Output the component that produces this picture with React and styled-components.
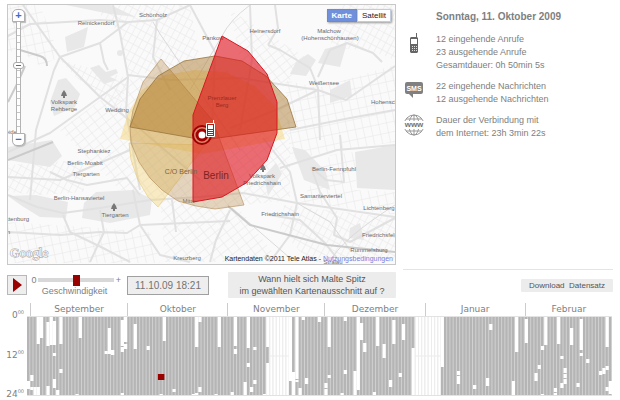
import React from "react";
import styled, { createGlobalStyle } from "styled-components";

const GlobalStyle = createGlobalStyle`
  * {
    box-sizing: border-box;
  }

  body {
    margin: 0;
    background: #fff;
    color: #808080;
    font-family: "Liberation Sans", Arial, sans-serif;
    font-size: 9px;
    line-height: 13px;
  }

  button,
  input {
    margin: 0;
    padding: 0;
    font-family: inherit;
  }
`;

const Page = styled.main`
  padding: 4px 7px;
`;

const Columns = styled.div`
  display: grid;
  grid-template-columns: minmax(0, 389fr) minmax(0, 210fr);
  column-gap: 7px;
`;

/* map */

const MapFrame = styled.section`
  position: relative;
  border: 1px solid #c8c8c8;
  overflow: hidden;
`;

const MapCanvas = styled.svg`
  display: block;
  width: 100%;
  height: auto;
  font-family: "Liberation Sans", Arial, sans-serif;
`;

const MapTypes = styled.div`
  position: absolute;
  top: 4px;
  right: 4px;
  display: flex;
  box-shadow: 1px 1px 2px #999;
`;

const MapTypeButton = styled.button`
  height: 13px;
  padding: 0 4px;
  border: 1px solid ${(props) => (props.$active ? "#6d8acc" : "#c4cbdc")};
  background: ${(props) => (props.$active ? "#7190dc" : "#fff")};
  color: ${(props) => (props.$active ? "#fff" : "#222")};
  font-size: 8px;
  font-weight: ${(props) => (props.$active ? "bold" : "normal")};
  line-height: 11px;
`;

const ZoomControl = styled.div`
  position: absolute;
  top: 4px;
  left: 4px;
  display: flex;
  flex-direction: column;
  align-items: center;
`;

const ZoomButton = styled.button`
  width: 13px;
  height: 13px;
  border: 1px solid #b0b0b0;
  border-radius: ${(props) => (props.$end ? "0 0 5px 5px" : "5px 5px 0 0")};
  background: #fff;
  box-shadow: 1px 1px 1px #bbb;
  color: #3c6ccf;
  font-size: 11px;
  font-weight: bold;
  line-height: 9px;
`;

const ZoomSlider = styled.input.attrs({ type: "range" })`
  appearance: none;
  writing-mode: vertical-lr;
  direction: rtl;
  width: 11px;
  height: 111px;
  background: none;

  &::-webkit-slider-runnable-track {
    width: 5px;
    height: 111px;
    border: solid #b4b4b4;
    border-width: 0 1px;
    background: repeating-linear-gradient(#fff 0 6px, #c4c4c4 6px 7px);
  }

  &::-webkit-slider-thumb {
    appearance: none;
    width: 11px;
    height: 7px;
    margin-left: -4px;
    border: 1px solid #a8a8a8;
    border-radius: 3px;
    background: linear-gradient(#3c6ccf, #3c6ccf) center / 5px 1px no-repeat #fff;
  }
`;

const Attribution = styled.p`
  position: absolute;
  right: 2px;
  bottom: 0;
  margin: 0;
  color: #222;
  font-size: 7px;
  line-height: 11px;

  a {
    color: #8080dd;
    text-decoration: none;
  }
`;

const parks = [
  "58,80 66,78 80,94 75,107 54,116 50,102",
  "65,37 88,27 84,47 67,52",
  "90,68 99,65 106,72 116,69 118,73 110,77 117,80 104,84",
  "66,5 110,5 136,17 110,14",
  "325,49 347,43 340,67 318,63",
  "296,62 308,54 316,60 306,76 290,74",
  "84,203 96,192 133,190 152,199 150,215 110,223 82,218",
  "8,196 36,195 68,202 66,218 40,217 22,206",
  "8,147 52,140 62,156 50,167 8,160",
  "355,152 395,145 395,190 357,188",
  "292,147 305,150 326,172 330,190 304,180",
  "264,176 276,163 282,174 268,196",
  "350,228 360,223 364,240 349,238",
  "330,90 350,80 352,96 330,103",
];

const blocks = [
  { id: "a", points: "60,60 128,78 120,112 100,97 75,76" },
  { id: "b", points: "8,5 40,5 60,57 40,66 20,50 8,52" },
  { id: "a", points: "90,5 190,5 200,60 128,77 120,33" },
  { id: "c", points: "60,130 128,80 200,60 290,95 290,200 200,210 120,190" },
  { id: "b", points: "8,222 100,228 150,232 160,263 8,263" },
  { id: "a", points: "8,165 82,160 84,192 40,195 8,192" },
  { id: "c", points: "160,200 240,210 280,262 165,262" },
  { id: "b", points: "285,80 318,88 395,65 395,142 337,150 290,160" },
  { id: "c", points: "230,10 310,60 280,90 240,60" },
  { id: "a", points: "284,205 395,218 395,262 310,262 280,230" },
  { id: "b", points: "330,155 355,152 356,190 395,192 395,215 300,202" },
  { id: "a", points: "340,5 395,5 395,60 370,50 330,48" },
];

const streets = [
  "M23 5 L60 57 L100 97 L133 123 L200 180",
  "M113 5 L120 33 L128 77 L126 112 L140 190",
  "M60 57 L100 43 L128 22 L157 20 L190 5",
  "M157 20 L153 57 L170 90",
  "M60 57 L54 70 L36 130 L30 200",
  "M100 43 L104 62 L108 70",
  "M8 36 L30 24 L66 22 L100 20 L128 22",
  "M128 77 L50 133 L8 152",
  "M128 75 L170 80 L240 78 L318 90",
  "M190 5 L215 52 L212 130",
  "M250 5 L252 60 L240 130",
  "M268 45 L280 50 L310 68 L318 88 L320 140",
  "M318 77 L330 50 L347 43 L373 53 L382 62",
  "M318 90 L346 100 L395 66",
  "M318 90 L276 110 L230 128",
  "M275 5 L278 28 L268 45",
  "M395 110 L350 118 L290 130",
  "M280 168 L337 150 L395 145",
  "M243 193 L297 203 L395 217",
  "M263 138 L290 172 L297 203 L290 235 L270 262",
  "M311 167 L320 192 L337 218 L334 235 L350 242 L395 218",
  "M311 167 L326 180 L344 182 L340 135",
  "M8 195 L37 207 L63 213 L100 208 L150 200 L200 197 L243 193",
  "M8 232 L60 235 L100 232 L127 233 L140 225 L230 221",
  "M63 215 L70 232 L103 248 L130 262",
  "M100 210 L104 232 L90 262",
  "M133 190 L140 225 L160 255 L190 262",
  "M50 172 L67 180 L87 185 L127 178 L140 195",
  "M172 200 L176 232",
  "M230 210 L216 240 L210 262",
  "M8 177 L60 180 L130 150",
  "M270 215 L300 220 L325 243 L340 262",
];

const motorways = [
  "M20 50 L40 56 Q47 58 47 66",
  "M8 102 L18 82 L25 66",
  "M8 160 L53 142",
  "M228 206 L250 225 L300 238 L327 245 L395 252",
];

const railways = [
  "M250 5 Q230 20 222 36 L190 90",
  "M153 22 L160 34 L182 66 L240 150",
  "M232 208 L290 258",
  "M297 203 L330 222 L350 250",
  "M395 205 Q340 240 330 262",
];

const places = [
  ["Schönholz", 153, 17],
  ["Reinickendorf", 96, 25],
  ["Pankow", 213, 40],
  ["Heinersdorf", 265, 33],
  ["Malchow", 329, 33],
  ["(Hohenschönhausen)", 330, 40],
  ["Weißensee", 324, 85],
  ["Volkspark", 64, 104],
  ["Rehberge", 64, 111],
  ["Wedding", 117, 112],
  ["Stephankiez", 94, 153],
  ["Berlin-Moabit", 85, 165],
  ["Tiergarten", 86, 176],
  ["Berlin-Hansaviertel", 79, 200],
  ["Tiergarten", 115, 217],
  ["Kreuzberg", 187, 260],
  ["Volkspark", 262, 178],
  ["Friedrichshain", 262, 185],
  ["Berlin-Fennpfuhl", 334, 171],
  ["Samariterviertel", 321, 198],
  ["Friedrichshain", 280, 216],
  ["Lichtenberg", 379, 210],
  ["Rummelsburg", 369, 252],
  ["Stralau", 333, 264],
  ["Mitte", 189, 203],
];

const StreetGrid = ({ id, size, angle }) => (
  <pattern
    id={`grid-${id}`}
    width={size}
    height={size + 2}
    patternUnits="userSpaceOnUse"
    patternTransform={`rotate(${angle})`}
  >
    <path d={`M0 0 H${size} M0 0 V${size + 2}`} stroke="#e6e6e6" fill="none" />
  </pattern>
);

const Tree = ({ x, y }) => (
  <path
    d="M0 -4 L2 -1 L3 2 H1 V4 H-1 V2 H-3 L-2 -1 Z"
    transform={`translate(${x} ${y})`}
    fill="#777"
  />
);

const CityMap = () => (
  <MapCanvas viewBox="8 5 387 259" role="img" aria-label="Karte von Berlin">
    <defs>
      <StreetGrid id="a" size={6} angle={28} />
      <StreetGrid id="b" size={8} angle={-12} />
      <StreetGrid id="c" size={7} angle={52} />
    </defs>
    <rect x="8" y="5" width="387" height="259" fill="#fafafa" />
    {blocks.map((block) => (
      <polygon
        key={block.points}
        points={block.points}
        fill={`url(#grid-${block.id})`}
      />
    ))}
    <g fill="#e8e8e8">
      {parks.map((points) => (
        <polygon key={points} points={points} />
      ))}
      <circle cx="120" cy="53" r="3" />
    </g>
    <g fill="none" strokeLinejoin="round">
      <g stroke="#e1e1e1" strokeWidth="2">
        {streets.map((d) => (
          <path key={d} d={d} />
        ))}
      </g>
      <g stroke="#dadada">
        {railways.map((d) => (
          <path key={d} d={d} />
        ))}
      </g>
      <g stroke="#cbcbcb" strokeWidth="2">
        {motorways.map((d) => (
          <path key={d} d={d} />
        ))}
      </g>
    </g>

    <g fill="#6a6a6a" fontSize="6" textAnchor="middle">
      {places.map(([name, x, y]) => (
        <text key={`${name}${y}`} x={x} y={y}>
          {name}
        </text>
      ))}
      <g textAnchor="start">
        <text x="371" y="104">Hohenschönhausen</text>
        <text x="362" y="237">Friedrichsfelde</text>
      </g>
      <g textAnchor="end">
        <text x="29" y="221">Charlottenburg</text>
        <text x="17" y="134">Jungfernheide</text>
        <text x="10" y="234">n</text>
      </g>
    </g>
    <Tree x={64} y={94} />
    <Tree x={114} y={207} />
    <Tree x={263} y={168} />

    {/* reach of the radio cells */}
    <g strokeLinejoin="round">
      <polygon
        points="120,139 128,113 142,90 165,75 195,70 225,72 255,86 275,106 285,139 202,154"
        fill="#f5cf60"
        fillOpacity="0.42"
      />
      <polygon
        points="129,143 131,160 138,180 148,197 158,207 205,145"
        fill="#f5cf60"
        fillOpacity="0.36"
        stroke="#e8c878"
        strokeOpacity="0.6"
      />
      <polygon
        points="161,59 143,82 133,110 130,127 131,143 139,162 150,178 162,190 178,201 196,206 215,209 244,205 213,121"
        fill="#b98542"
        fillOpacity="0.32"
        stroke="#b08a58"
        strokeOpacity="0.6"
      />
      <polygon
        points="130,127 140,99 158,76 184,61 215,56 242,61 266,76 287,99 296,127 204,140"
        fill="#a87022"
        fillOpacity="0.45"
        stroke="#99763e"
        strokeOpacity="0.8"
      />
      <polygon
        points="222,36 248,51 267,74 277,102 277,133 267,160 246,183 222,197 193,202 193,115"
        fill="#e00d18"
        fillOpacity="0.6"
        stroke="#d81820"
      />
    </g>
    <g textAnchor="middle">
      <g fontSize="6" fill="#a02a1c">
        <text x="222" y="100">Prenzlauer</text>
        <text x="222" y="107">Berg</text>
      </g>
      <text x="181" y="174" fontSize="7" fill="#7d633c">C/O Berlin</text>
      <text x="216" y="179" fontSize="10" fill="#7c2424">Berlin</text>
    </g>

    {/* current position */}
    <circle cx="202" cy="135" r="9" fill="#d98468" stroke="#a00000" strokeWidth="2" />
    <circle cx="202" cy="135" r="5" fill="#fff" stroke="#a00000" strokeWidth="3" />
    <g stroke="#fff">
      <path d="M213.5 120 V124" />
      <path d="M206.5 123.5 H214.5 V136.5 H206.5 Z" fill="#b81a14" />
      <path d="M208 125 H213 V129 H208 Z" fill="#fff" stroke="none" />
      <path d="M208 130.5 H213 M208 132.5 H213 M208 134.5 H213" />
    </g>

    <text
      x="10"
      y="257"
      fontFamily="Liberation Serif, serif"
      fontSize="13"
      fill="#fff"
      stroke="#999"
      strokeWidth="1"
      paintOrder="stroke"
    >
      Google
    </text>
  </MapCanvas>
);

/* info column */

const Info = styled.aside`
  padding-top: 6px;
`;

const InfoTitle = styled.h1`
  margin: 0 0 10px 33px;
  font-size: 10px;
  line-height: 13px;
`;

const InfoRow = styled.div`
  display: grid;
  grid-template-columns: 22px 1fr;
  column-gap: 11px;
  margin-bottom: 8px;

  svg {
    justify-self: center;
  }

  p {
    margin: 0;
  }
`;

const PhoneIcon = () => (
  <svg width="10" height="21" viewBox="0 0 10 21" fill="#666">
    <path d="M7 0 H8 V4 L9 5 V19 L8 20 H2 L1 19 V5 L2 4 H7 Z" />
    <path d="M2 6 H8 V11 H2 Z" fill="#fff" />
    <path
      d="M2 13.5 H8 M2 15.5 H8 M2 17.5 H8"
      stroke="#ddd"
      strokeDasharray="1 1"
      strokeDashoffset="1"
    />
  </svg>
);

const SmsIcon = () => (
  <svg width="20" height="19" viewBox="0 0 20 19">
    <path
      d="M3 2 H17 Q19 2 19 4 V12 Q19 14 17 14 H9 V18 L5 14 H3 Q1 14 1 12 V4 Q1 2 3 2 Z"
      fill="#808080"
    />
    <text
      x="10"
      y="11"
      fontSize="7"
      fontWeight="bold"
      textAnchor="middle"
      fill="#fff"
    >
      SMS
    </text>
  </svg>
);

const WebIcon = () => (
  <svg width="22" height="22" viewBox="0 0 22 22">
    <g fill="none" stroke="#999">
      <circle cx="11" cy="11" r="10" />
      <ellipse cx="11" cy="11" rx="5" ry="10" />
      <path d="M11 1 V21 M3 5 H19 M3 17 H19" />
    </g>
    <path d="M0 7 H22 V15 H0 Z" fill="#fff" />
    <text
      x="11"
      y="13"
      fontSize="8"
      fontWeight="bold"
      textAnchor="middle"
      fill="#737373"
    >
      www
    </text>
  </svg>
);

/* controls */

const Controls = styled.div`
  display: flex;
  align-items: center;
  height: 38px;
  padding-top: 2px;
`;

const PlayButton = styled.button`
  display: flex;
  align-items: center;
  justify-content: center;
  width: 20px;
  height: 20px;
  border: 1px solid #b8b8b8;
  background: #eee;
`;

const Speed = styled.div`
  display: grid;
  grid-template-columns: 8px 76px 9px;
  align-items: center;
  margin: 0 4px 0 3px;
  text-align: center;

  span {
    line-height: 12px;
  }

  label {
    grid-column: 1 / -1;
    padding-right: 4px;
    line-height: 10px;
  }
`;

const SpeedSlider = styled.input.attrs({ type: "range" })`
  appearance: none;
  width: 100%;
  height: 11px;
  background: linear-gradient(#d8d8d8, #d8d8d8) center / 100% 4px no-repeat;

  &::-webkit-slider-thumb {
    appearance: none;
    width: 7px;
    height: 11px;
    background: #990000;
  }
`;

const DateField = styled.input`
  width: 82px;
  height: 19px;
  border: 1px solid #a0a0a0;
  background: #eee;
  color: #737373;
  font-size: 10px;
  text-align: center;
`;

const GreyButton = styled.button`
  padding: 0 8px;
  border: 0;
  border-radius: 1px;
  background: #ececec;
  color: #555;
  font-size: ${(props) => (props.$small ? "8px" : "9px")};
  line-height: ${(props) => (props.$small ? "13px" : "12px")};
`;

const QuestionButton = styled(GreyButton)`
  width: 168px;
  height: 26px;
  margin-left: auto;
`;

const DownloadBar = styled.div`
  display: flex;
  justify-content: flex-end;
  align-items: center;
  height: 32px;
  margin-top: 4px;
  border-top: 1px solid #e4e4e4;
`;

/* timeline */

const Timeline = styled.section`
  display: grid;
  grid-template-columns: 20px minmax(0, 1fr);
  margin-right: 1px;
  font-family: "DejaVu Sans", Verdana, sans-serif;
`;

const Months = styled.div`
  grid-column: 2;
  display: grid;
  grid-template-columns: 1fr 30fr 31fr 30fr 31fr 31fr 27fr;
`;

const Month = styled.div`
  height: 13px;
  border-left: 1px solid #ccc;
  line-height: 13px;
  text-align: center;

  &:first-child {
    border: 0;
  }
`;

const Hours = styled.div`
  display: flex;
  flex-direction: column;
  justify-content: space-between;
  height: 92px;
  margin: -7px 3px 0 -4px;
  text-align: right;

  span {
    line-height: 13px;
  }

  sup {
    font-size: 5px;
    line-height: 5px;
  }
`;

const Days = styled.svg`
  display: block;
  width: 100%;
  height: 80px;
  border: solid #e2e2e2;
  border-width: 1px 0;
`;

const months = ["", "September", "Oktober", "November", "Dezember", "Januar", "Februar"];
const DAY_COUNT = 181;

// [day, start, end], 78 units are one full day
const gaps = [
  [0, 64, 72], [1, 58, 64], [1, 70, 73], [2, 70, 78], [3, 0, 27], [3, 70, 78],
  [4, 0, 21], [6, 5, 29], [6, 69, 78], [7, 0, 28], [8, 4, 28], [8, 36, 39],
  [8, 62, 71], [9, 73, 78], [10, 0, 27], [10, 52, 56], [15, 77, 78],
  [16, 0, 21], [24, 34, 37], [25, 11, 37], [26, 33, 38], [29, 3, 29],
  [29, 30, 35], [29, 76, 78], [30, 0, 25], [30, 27, 32], [33, 7, 32],
  [37, 29, 33], [41, 77, 78], [42, 0, 24], [45, 72, 75], [51, 77, 78],
  [52, 0, 30], [52, 76, 78], [53, 0, 5], [53, 70, 75], [58, 77, 78],
  [59, 0, 30], [63, 75, 78], [64, 0, 29], [64, 32, 37], [67, 65, 78],
  [68, 0, 31], [68, 46, 50], [69, 70, 75], [70, 30, 33], [70, 63, 67],
  [73, 77, 78], [74, 0, 30], [74, 46, 78], [75, 0, 78], [76, 0, 78],
  [77, 0, 78], [78, 0, 78], [79, 0, 78], [80, 0, 78], [81, 0, 64],
  [82, 55, 78], [83, 0, 62], [83, 63, 65], [84, 71, 78], [85, 0, 3],
  [86, 61, 67], [90, 0, 5], [92, 66, 71], [92, 72, 78], [93, 0, 30],
  [93, 58, 61], [97, 76, 78], [98, 0, 4], [98, 53, 57], [101, 54, 78],
  [102, 0, 73], [103, 6, 23], [104, 26, 35], [107, 75, 78], [108, 0, 29],
  [110, 27, 41], [112, 63, 70], [113, 3, 27], [115, 56, 60], [116, 7, 23],
  [119, 31, 78], [120, 0, 78], [121, 0, 78], [122, 0, 78], [123, 0, 78],
  [124, 0, 78], [125, 0, 78], [126, 0, 78], [127, 0, 78], [128, 0, 50],
  [133, 54, 58], [133, 59, 67], [138, 68, 72], [142, 61, 69], [143, 7, 13],
  [150, 64, 78], [151, 0, 35], [154, 2, 26], [157, 56, 64], [158, 48, 52],
  [159, 29, 33], [159, 77, 78], [160, 0, 28], [163, 71, 75], [163, 76, 78],
  [164, 0, 27], [165, 39, 42], [165, 66, 71], [166, 51, 56], [166, 57, 61],
  [166, 62, 67], [168, 11, 28], [170, 66, 70], [171, 2, 33], [171, 36, 39],
  [173, 42, 46], [177, 54, 58], [178, 51, 57], [179, 0, 30], [179, 49, 53],
  [179, 70, 74], [180, 64, 77],
];

const DayChart = () => (
  <Days viewBox={`0 0 ${DAY_COUNT} 78`} preserveAspectRatio="none">
    <rect width={DAY_COUNT} height="78" fill="#b5b5b5" />
    {Array.from({ length: DAY_COUNT }, (_, day) => (
      <rect key={day} x={day + 0.7} width="0.3" height="78" fill="#d2d2d2" />
    ))}
    {gaps.map(([day, start, end]) => (
      <rect
        key={`${day}-${start}`}
        x={day}
        y={start}
        width="1"
        height={end - start}
        fill="#fff"
      />
    ))}
    {gaps
      .filter(([, start, end]) => end - start === 78)
      .map(([day]) => (
        <path key={day} d={`M${day} 0 h0.3 v78 h-0.3 Z M${day} 38.5 h1 v1 h-1 Z`} fill="#ececec" />
      ))}
    <rect x="40.5" y="57" width="2" height="6" fill="#990000" />
  </Days>
);

const App = () => (
  <>
    <GlobalStyle />
    <Page>
      <Columns>
        <MapFrame>
          <CityMap />
          <ZoomControl>
            <ZoomButton aria-label="Vergrößern">+</ZoomButton>
            <ZoomSlider aria-label="Zoomstufe" defaultValue="62" />
            <ZoomButton $end aria-label="Verkleinern">
              −
            </ZoomButton>
          </ZoomControl>
          <MapTypes>
            <MapTypeButton $active>Karte</MapTypeButton>
            <MapTypeButton>Satellit</MapTypeButton>
          </MapTypes>
          <Attribution>
            Kartendaten ©2011 Tele Atlas -{" "}
            <a href="#nutzungsbedingungen">Nutzungsbedingungen</a>
          </Attribution>
        </MapFrame>
        <Info>
          <InfoTitle>Sonntag, 11. Oktober 2009</InfoTitle>
          <InfoRow>
            <PhoneIcon />
            <p>
              12 eingehende Anrufe
              <br />
              23 ausgehende Anrufe
              <br />
              Gesamtdauer: 0h 50min 5s
            </p>
          </InfoRow>
          <InfoRow>
            <SmsIcon />
            <p>
              22 eingehende Nachrichten
              <br />
              12 ausgehende Nachrichten
            </p>
          </InfoRow>
          <InfoRow>
            <WebIcon />
            <p>
              Dauer der Verbindung mit
              <br />
              dem Internet: 23h 3min 22s
            </p>
          </InfoRow>
        </Info>
        <Controls>
          <PlayButton aria-label="Abspielen">
            <svg width="9" height="14" viewBox="0 0 9 14">
              <path d="M0 0 L9 7 L0 14 Z" fill="#990000" />
            </svg>
          </PlayButton>
          <Speed>
            <span>0</span>
            <SpeedSlider id="speed" defaultValue="50" />
            <span>+</span>
            <label htmlFor="speed">Geschwindigkeit</label>
          </Speed>
          <DateField aria-label="Zeitpunkt" readOnly value="11.10.09 18:21" />
          <QuestionButton>
            Wann hielt sich Malte Spitz
            <br />
            im gewählten Kartenausschnitt auf ?
          </QuestionButton>
        </Controls>
        <DownloadBar>
          <GreyButton $small>Download&nbsp; Datensatz</GreyButton>
        </DownloadBar>
      </Columns>
      <Timeline>
        <Months>
          {months.map((month) => (
            <Month key={month}>{month}</Month>
          ))}
        </Months>
        <Hours>
          {["0", "12", "24"].map((hour) => (
            <span key={hour}>
              {hour}
              <sup>00</sup>
            </span>
          ))}
        </Hours>
        <DayChart />
      </Timeline>
    </Page>
  </>
);

export default App;
